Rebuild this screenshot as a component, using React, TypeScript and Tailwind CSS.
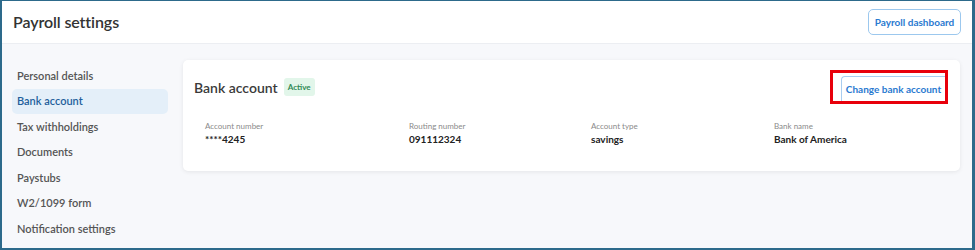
const navItems = [
  "Personal details",
  "Bank account",
  "Tax withholdings",
  "Documents",
  "Paystubs",
  "W2/1099 form",
  "Notification settings",
];

const fields = [
  { label: "Account number", value: "****4245", width: "w-[204px]" },
  { label: "Routing number", value: "091112324", width: "w-[182px]" },
  { label: "Account type", value: "savings", width: "w-[183px]" },
  { label: "Bank name", value: "Bank of America", width: "w-[160px]" },
];

export default function App() {
  return (
    <div className="w-[975px] h-[250px] overflow-hidden bg-[#2d6a8b] pl-[2px] pt-[1px] pr-[3px] pb-[2px] font-['Lato',sans-serif]">
      <div className="flex h-full flex-col bg-[#f7f8fb]">
        <header className="flex h-[43px] shrink-0 items-center justify-between border-b border-[#eceef2] bg-white pl-[11px] pr-[11px]">
          <h1 className="text-[16px] font-semibold tracking-[-0.1px] text-[#333]">Payroll settings</h1>
          <button className="h-[26px] w-[93px] rounded-[5px] border border-[#9cc8ee] bg-white text-[10px] font-bold text-[#2a7ad0]">
            Payroll dashboard
          </button>
        </header>

        <div className="flex flex-1 pt-[16px]">
          <nav className="flex w-[181px] shrink-0 flex-col pl-[10px] pr-[15px] pt-[3px]">
            {navItems.map((item) => (
              <div
                key={item}
                className={`flex h-[25.5px] items-center rounded-[5px] px-[5px] text-[11px] font-semibold ${
                  item === "Bank account" ? "bg-[#e4eff9] text-[#1f5f9c]" : "text-[#555]"
                }`}
              >
                {item}
              </div>
            ))}
          </nav>

          <section className="h-[111px] w-[777px] rounded-[5px] bg-white shadow-[0_1px_4px_rgba(0,0,0,0.08)]">
            <div className="flex items-center justify-between pl-[11px] pr-[12px] pt-[10px]">
              <div className="flex items-center gap-[6px]">
                <h2 className="text-[14px] font-semibold text-[#3a3a3a]">Bank account</h2>
                <span className="flex h-[18px] w-[31px] items-center justify-center rounded-[3px] bg-[#e2f6ea] text-[8px] font-bold text-[#2f8a55]">
                  Active
                </span>
              </div>
              <div className="h-[34px] w-[118px] overflow-hidden border-[3px] border-[#e8000b] pl-[8px] pt-[2px]">
                <button className="h-[30px] w-[104px] rounded-tl-[4px] border border-r-0 border-b-0 border-[#a9cdf0] bg-white pb-[3px] text-[10px] font-bold text-[#2a7ad0]">
                  Change bank account
                </button>
              </div>
            </div>
            <div className="mt-[17px] flex pl-[22px]">
              {fields.map((f) => (
                <div key={f.label} className={`flex flex-col gap-[1px] ${f.width}`}>
                  <span className="text-[8px] leading-[10px] text-[#8a8a8a]">{f.label}</span>
                  <span className="text-[10px] font-bold leading-[14px] text-[#222]">{f.value}</span>
                </div>
              ))}
            </div>
          </section>
        </div>
      </div>
    </div>
  );
}
